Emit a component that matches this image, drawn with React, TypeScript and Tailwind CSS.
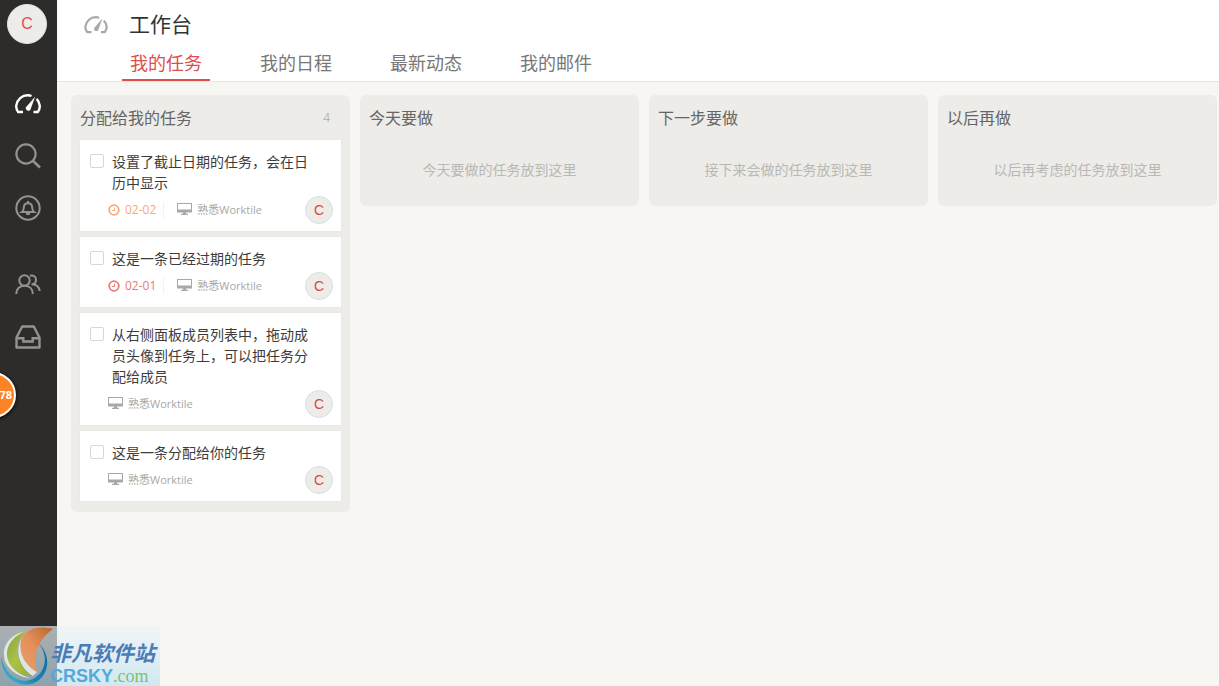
import { useState } from "react";
import type { ReactNode } from "react";

type Task = {
  id: number;
  title: string;
  project: string;
  due?: string;
  dueClass?: string;
};

const tabs = ["我的任务", "我的日程", "最新动态", "我的邮件"];

const assignedTasks: Task[] = [
  { id: 1, title: "设置了截止日期的任务，会在日历中显示", project: "熟悉Worktile", due: "02-02", dueClass: "text-[#f9a877]" },
  { id: 2, title: "这是一条已经过期的任务", project: "熟悉Worktile", due: "02-01", dueClass: "text-[#e67b78]" },
  { id: 3, title: "从右侧面板成员列表中，拖动成员头像到任务上，可以把任务分配给成员", project: "熟悉Worktile" },
  { id: 4, title: "这是一条分配给你的任务", project: "熟悉Worktile" },
];

const emptyColumns = [
  { title: "今天要做", hint: "今天要做的任务放到这里" },
  { title: "下一步要做", hint: "接下来会做的任务放到这里" },
  { title: "以后再做", hint: "以后再考虑的任务放到这里" },
];

function GaugeIcon({ className }: { className?: string }) {
  return (
    <svg viewBox="0 0 26 20" className={className} fill="none" stroke="currentColor" strokeWidth="2.4">
      <path d="M8 18H3.200C1.5 15.800 1 13.600 1.300 11.400C2.200 5.400 7 1.300 12.600 1.300c1.400 0 2.700.2 3.900.7" />
      <path d="M18.500 18H22.800c1.700-2.200 2.200-4.400 1.900-6.600C24.300 8.500 23.300 6.600 21.600 4.900" />
      <path d="M20.200 2.500L15.600 15.300C14.400 18.200 9.800 16.500 11 13.300Z" fill="currentColor" stroke="none" />
    </svg>
  );
}

function SearchIcon() {
  return (
    <svg viewBox="0 0 26 26" className="w-[26px] h-[26px]" fill="none" stroke="currentColor" strokeWidth="2.2">
      <circle cx="11" cy="11" r="9.6" />
      <path d="M17.8 17.8L25 24.5" strokeWidth="2.6" />
    </svg>
  );
}

function BellIcon() {
  return (
    <svg viewBox="0 0 26 26" className="w-[26px] h-[26px]" fill="none" stroke="currentColor" strokeWidth="2">
      <circle cx="13" cy="13" r="11.7" />
      <path d="M7 17C8.700 15.800 8.600 14.500 8.800 12.300C9 9.700 10.700 8.200 13 8.200s4 1.500 4.200 4.100c.2 2.200.1 3.500 1.800 4.700Z" />
      <path d="M13 6v2.500" />
      <path d="M11.500 18h3v1.500h-3z" fill="currentColor" strokeWidth="1" />
    </svg>
  );
}

function MembersIcon() {
  return (
    <svg viewBox="0 0 26 22" className="w-[26px] h-[22px] mb-[2px]" fill="none" stroke="currentColor" strokeWidth="2">
      <circle cx="9.5" cy="7.5" r="5.2" />
      <path d="M1.200 21c0-5 3.300-8.300 8.300-8.300s8.300 3.300 8.300 8.300" />
      <path d="M15 2.700c3.500-1 6 1 6 4 0 2.800-1.800 4.600-4.500 4.600 4.800.2 7.700 2.700 8.200 6.700" />
    </svg>
  );
}

function InboxIcon() {
  return (
    <svg viewBox="0 0 26 24" className="w-[26px] h-[24px]" fill="none" stroke="currentColor" strokeWidth="2.4">
      <path d="M1.500 12.500L7.200 1.500h11.600L24.500 12.500v10h-23Z" strokeLinejoin="round" />
      <path d="M1.500 13.200h6.800v3.300h9.400v-3.300h6.800" />
    </svg>
  );
}

function MonitorIcon() {
  return (
    <svg viewBox="0 0 15 12" className="w-[15px] h-3 mb-[2px] shrink-0" fill="currentColor">
      <path d="M0 0h15v9.500H0ZM1 1v5.500h13V1Z" fillRule="evenodd" />
      <path d="M6 9h3v1.800h2V12H4v-1.200h2Z" />
    </svg>
  );
}

function ClockIcon() {
  return (
    <svg viewBox="0 0 12 12" className="w-3 h-3" fill="none" stroke="currentColor">
      <circle cx="6" cy="6" r="4.8" strokeWidth="1.8" />
      <path d="M6.500 3.500v3H4" />
    </svg>
  );
}

function NavLink({ label, active, children }: { label: string; active?: boolean; children: ReactNode }) {
  return (
    <a
      href="#"
      aria-label={label}
      className={`w-full h-[52px] pr-[2px] flex items-center justify-center ${active ? "text-white" : "text-[#94928f]"}`}
    >
      {children}
    </a>
  );
}

function Sidebar() {
  return (
    <aside className="w-[57px] shrink-0 bg-[#2d2c2a] pt-1 flex flex-col items-center">
      <button className="w-10 h-10 mr-[3px] rounded-full bg-[#edece9] border border-[#dbe3e8] text-[#df4d4d] text-base font-['Liberation_Sans',sans-serif]">
        C
      </button>
      <nav className="w-full mt-[34px]">
        <NavLink label="工作台" active>
          <GaugeIcon className="w-[26px] h-5" />
        </NavLink>
        <NavLink label="搜索">
          <SearchIcon />
        </NavLink>
        <NavLink label="通知">
          <BellIcon />
        </NavLink>
        <div className="mt-[25px]">
          <NavLink label="成员">
            <MembersIcon />
          </NavLink>
          <NavLink label="收件箱">
            <InboxIcon />
          </NavLink>
        </div>
      </nav>
    </aside>
  );
}

function TaskCard({ task }: { task: Task }) {
  return (
    <li className="bg-white pt-[11px] pb-[7px] pl-[10px] pr-2 shadow-[0_0_1px_#d8d6d2]">
      <div className="flex items-start">
        <input
          id={`task-${task.id}`}
          type="checkbox"
          className="appearance-none w-[14px] h-[14px] mt-[3px] mr-2 shrink-0 rounded-[2px] border border-[#d9d6cf] bg-white checked:bg-[#d9d6cf]"
        />
        <label htmlFor={`task-${task.id}`} className="pr-6 text-sm leading-[21px] text-[#3c3c3c]">
          {task.title}
        </label>
      </div>
      <div className="h-7 mt-[3px] pl-[18px] flex items-center text-[11px] text-[#a8a8a4]">
        {task.due && (
          <span className={`flex items-center gap-[5px] pr-[7px] mr-[13px] border-r border-[#f3f2ef] text-xs ${task.dueClass}`}>
            <ClockIcon />
            {task.due}
          </span>
        )}
        <MonitorIcon />
        <span className="ml-[5px]">{task.project}</span>
        <span className="ml-auto w-7 h-7 rounded-full bg-[#edece9] border border-[#d6e0e6] text-[#d9483f] text-sm font-['Liberation_Sans',sans-serif] flex items-center justify-center">
          C
        </span>
      </div>
    </li>
  );
}

function SiteBadge() {
  return (
    <div className="absolute left-0 bottom-0 w-40 h-[60px] flex bg-[linear-gradient(to_bottom,rgba(236,244,249,0.66),rgba(190,225,240,0.66))]">
      <svg viewBox="0 0 54 60" className="w-[54px] h-[60px] shrink-0">
        <defs>
          <linearGradient id="ring" x1="1" y1="0" x2="0" y2="1">
            <stop offset="0" stopColor="#0b5f9c" />
            <stop offset="0.6" stopColor="#1c86bd" />
            <stop offset="1" stopColor="#4fc3dd" />
          </linearGradient>
          <linearGradient id="leaf" x1="0" y1="0" x2="1" y2="1">
            <stop offset="0" stopColor="#7f9c45" />
            <stop offset="0.5" stopColor="#abc243" />
            <stop offset="1" stopColor="#93ad3f" />
          </linearGradient>
          <linearGradient id="flame" x1="1" y1="0" x2="0" y2="1">
            <stop offset="0" stopColor="#b9652c" />
            <stop offset="0.5" stopColor="#e58f58" />
            <stop offset="1" stopColor="#e9a06c" />
          </linearGradient>
        </defs>
        <path d="M37 16C49 27 47 46 33 53C19 59 5 49 1 31C1 51 18 63 34 57C50 50 52 28 37 16Z" fill="url(#ring)" />
        <path d="M26 5C14 7 5 15 5 28C6 41 18 50 33 50C20 41 9 22 26 5Z" fill="url(#leaf)" />
        <path d="M26 5C12 8 3 17 4 30C5 42 17 51 30 52C14 47 6 37 7 26C8 17 15 9 26 5Z" fill="#dfe7dc" />
        <path d="M27 6C12 19 18 41 33 50L37 46C23 38 17 20 27 6Z" fill="#dde5e5" />
        <path d="M53 3C38-1 25 3 21 14C18 28 26 40 37 46C32 33 36 15 53 3Z" fill="url(#flame)" />
      </svg>
      <div className="pt-[14px] whitespace-nowrap -ml-1">
        <p className="text-[21px] leading-[26px] font-bold italic text-[#4a7db8]">非凡软件站</p>
        <p className="text-[18px] leading-5 text-[#52a9da] font-['Liberation_Sans',sans-serif] font-bold">
          CRSKY
          <span className="font-['Liberation_Serif',serif] font-normal text-[#7dbf7a]">.com</span>
        </p>
      </div>
    </div>
  );
}

export default function App() {
  const [activeTab, setActiveTab] = useState(0);

  return (
    <div
      lang="zh-CN"
      className="relative min-h-screen flex overflow-hidden bg-[#f7f6f2] font-['Open_Sans','Noto_Sans_CJK_SC',sans-serif]"
    >
      <Sidebar />

      <div className="flex-1 min-w-0">
        {/* Header */}
        <header className="bg-white border-b border-[#e9e7e2] pt-[7px]">
          <div className="flex items-center pl-[27px] h-9">
            <GaugeIcon className="w-6 h-[18px] text-[#a9a8a4]" />
            <h1 className="ml-[21px] text-[21px] text-[#333]">工作台</h1>
          </div>
          <div className="flex gap-[42px] pl-[65px]">
            {tabs.map((tab, index) => (
              <button
                key={tab}
                onClick={() => setActiveTab(index)}
                className={`h-[38px] px-2 pt-1 border-b-2 text-lg ${
                  activeTab === index ? "border-[#df4d4d] text-[#df4d4d]" : "border-transparent text-[#777]"
                }`}
              >
                {tab}
              </button>
            ))}
          </div>
        </header>

        {/* Task board */}
        <main className="grid grid-cols-4 items-start gap-[10px] pt-[13px] pl-[14px] pr-[2px]">
          <section className="rounded-md bg-[#edece9] px-[9px] pb-[11px]">
            <div className="h-[45px] flex items-center justify-between pr-[11px]">
              <h2 className="text-base text-[#666]">分配给我的任务</h2>
              <span className="text-xs text-[#b5b3af]">4</span>
            </div>
            <ul className="flex flex-col gap-[6px]">
              {assignedTasks.map((task) => (
                <TaskCard key={task.id} task={task} />
              ))}
            </ul>
          </section>

          {emptyColumns.map((column) => (
            <section key={column.title} className="rounded-md bg-[#edece9] px-[9px] pb-[21px]">
              <h2 className="h-[45px] flex items-center text-base text-[#666]">{column.title}</h2>
              <p className="h-[45px] pt-5 text-center text-sm text-[#b9b8b4]">{column.hint}</p>
            </section>
          ))}
        </main>
      </div>

      {/* Floating counter at the screen edge */}
      <div className="absolute top-[372px] -left-[30px] w-[46px] h-[46px] rounded-full border-2 border-white bg-[#fd8424] shadow-[0_1px_4px_#000] flex items-center justify-end pr-[2px] text-[11px] font-bold text-white">
        78
      </div>
      <SiteBadge />
    </div>
  );
}
